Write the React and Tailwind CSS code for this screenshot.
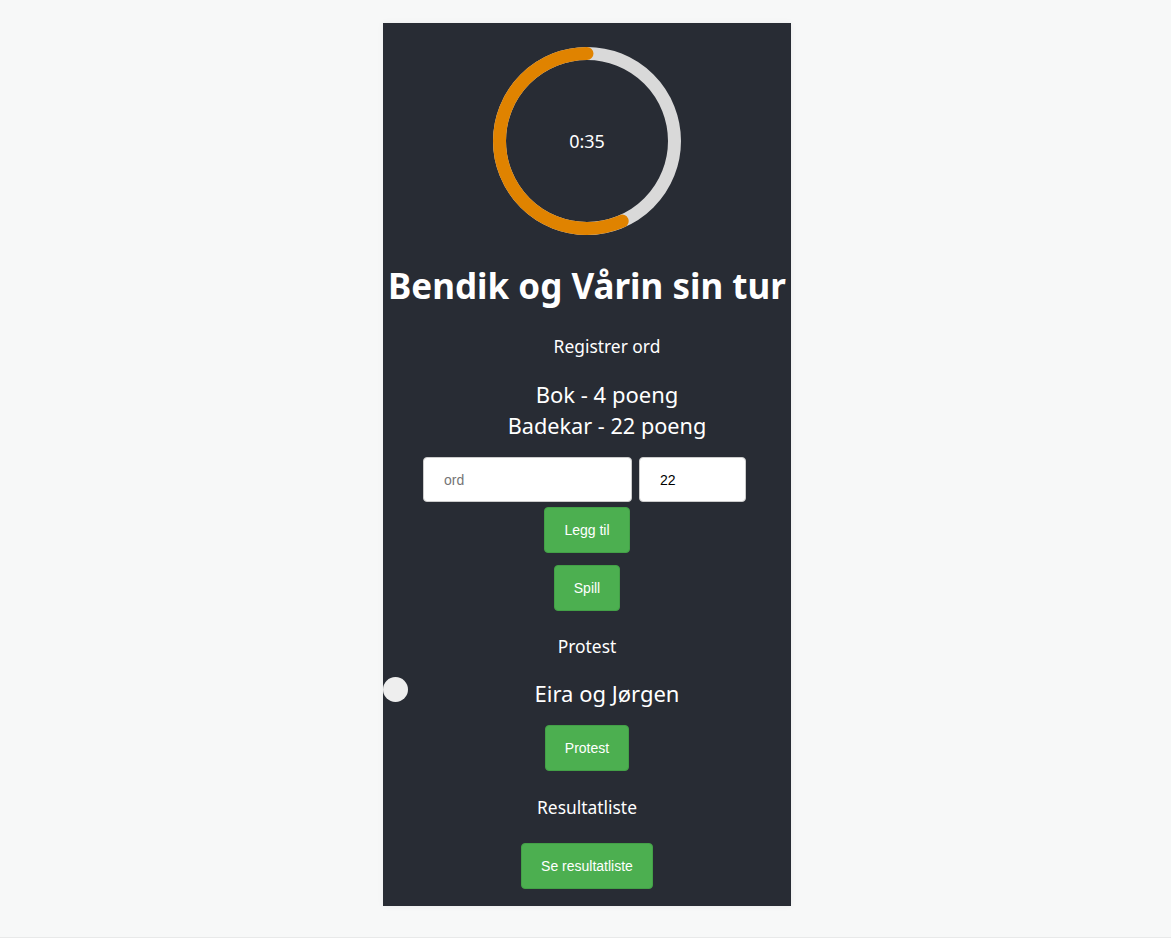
import React from 'react';

const R = 87.5;
const C = 2 * Math.PI * R;

const Timer = ({ fraction }) => (
  <div className="relative w-[200px] h-[200px] mt-[18px]">
    <svg width="200" height="200" viewBox="0 0 200 200">
      <circle cx="100" cy="100" r={R} fill="none" stroke="#d9d9d9" strokeWidth="13" />
      <circle
        cx="100"
        cy="100"
        r={R}
        fill="none"
        stroke="#e08300"
        strokeWidth="13"
        strokeLinecap="round"
        strokeDasharray={`${C * fraction} ${C}`}
        transform="rotate(-90 100 100) scale(1 -1) translate(0 -200)"
      />
    </svg>
    <div className="absolute inset-0 flex items-center justify-center text-[18px] text-white">0:35</div>
  </div>
);

const GreenButton = ({ children, className = '' }) => (
  <button
    className={`bg-[#4caf50] text-white text-[14px] leading-[17px] py-[13.5px] px-[19px] rounded-[4px] border border-[#43a047] font-['Liberation_Sans',Arial,sans-serif] ${className}`}
  >
    {children}
  </button>
);

export default function App() {
  return (
    <div className="min-h-[938px] bg-[#f7f8f8] pt-[23px] border-b border-[#e8e9e9] font-['Noto_Sans',sans-serif]">
      <div className="relative ml-[383px] w-[408px] bg-[#282c34] text-white flex flex-col items-center text-center pb-[17px] shadow-[0_0_6px_rgba(0,0,0,0.06)]">
        <Timer fraction={0.565} />

        <h1 className="mt-[23px] text-[35px] leading-[44px] font-bold whitespace-nowrap">Bendik og Vårin sin tur</h1>

        <h3 className="mt-[26px] w-full pl-10 text-[17.4px] leading-[24px]">Registrer ord</h3>

        <ul className="mt-[21px] w-full pl-10 text-[22px] leading-[31px]">
          <li>Bok - 4 poeng</li>
          <li className="text-[21.7px]">Badekar - 22 poeng</li>
        </ul>

        <div className="mt-[16px] self-start ml-[40px] flex gap-[7px] font-['Liberation_Sans',Arial,sans-serif] text-[14px]">
          <input
            type="text"
            placeholder="ord"
            className="w-[209px] h-[45px] bg-white text-black rounded-[4px] border border-[#ccc] px-[20px] placeholder:text-[#757575] outline-none"
          />
          <input
            type="text"
            defaultValue="22"
            className="w-[107px] h-[45px] bg-white text-black rounded-[4px] border border-[#ccc] px-[20px] outline-none"
          />
        </div>

        <GreenButton className="mt-[5px]">Legg til</GreenButton>
        <GreenButton className="mt-[12px]">Spill</GreenButton>

        <h3 className="mt-[23px] text-[17.4px] leading-[24px]">Protest</h3>

        <div className="relative mt-[20px] w-full pl-10 text-[22px] leading-[31px]">
          <span className="absolute left-0 top-[-1px] w-[25px] h-[25px] rounded-full bg-[#eeeeee]" />
          Eira og Jørgen
        </div>

        <GreenButton className="mt-[16px]">Protest</GreenButton>

        <h3 className="mt-[24px] text-[17.4px] leading-[24px]">Resultatliste</h3>

        <GreenButton className="mt-[24px]">Se resultatliste</GreenButton>
      </div>
    </div>
  );
}
